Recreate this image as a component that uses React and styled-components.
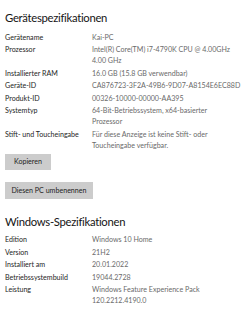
import React from 'react'
import styled, { createGlobalStyle } from 'styled-components'

const Global = createGlobalStyle`
  html, body {
    margin: 0;
    padding: 0;
    background: #ffffff;
    overflow: hidden;
  }
`

const Page = styled.div`
  width: 250px;
  height: 314px;
  overflow: hidden;
  padding: 0 0 0 5px;
  box-sizing: border-box;
  font-family: Lato, "Open Sans", sans-serif;
  color: #1a1a1a;
`

const Title = styled.h2`
  margin: ${props => props.$top}px 0 ${props => props.$bottom}px 0;
  font-size: 11.3px;
  font-weight: 400;
  letter-spacing: -0.3px;
  line-height: 16px;
  color: #151515;
`

const Specs = styled.div`
  display: grid;
  grid-template-columns: 87px 1fr;
  row-gap: 1.5px;
  font-size: 7.1px;
  line-height: 11px;
`

const Label = styled.div`
  color: #1e1e1e;
`

const Value = styled.div`
  color: #6a6a6a;
  padding-right: 4px;
`

const Button = styled.div`
  display: inline-flex;
  align-items: center;
  justify-content: center;
  height: ${props => props.$h}px;
  width: ${props => props.$w}px;
  margin-top: ${props => props.$top}px;
  background: #cccccc;
  color: #222;
  font-size: 7.1px;
  white-space: nowrap;
`

const Block = styled.div`
  display: flex;
  flex-direction: column;
  align-items: flex-start;
`

const device = [
  ['Gerätename', ['Kai-PC']],
  ['Prozessor', ['Intel(R) Core(TM) i7-4790K CPU @ 4.00GHz', '4.00 GHz']],
  ['Installierter RAM', ['16.0 GB (15.8 GB verwendbar)']],
  ['Geräte-ID', ['CA876723-3F2A-49B6-9D07-A8154E6EC88D']],
  ['Produkt-ID', ['00326-10000-00000-AA395']],
  ['Systemtyp', ['64-Bit-Betriebssystem, x64-basierter', 'Prozessor']],
  ['Stift- und Toucheingabe', ['Für diese Anzeige ist keine Stift- oder', 'Toucheingabe verfügbar.']],
]

const windows = [
  ['Edition', ['Windows 10 Home']],
  ['Version', ['21H2']],
  ['Installiert am', ['20.01.2022']],
  ['Betriebssystembuild', ['19044.2728']],
  ['Leistung', ['Windows Feature Experience Pack', '120.2212.4190.0']],
]

const SpecList = ({ rows }) => (
  <Specs>
    {rows.map(([label, lines]) => (
      <React.Fragment key={label}>
        <Label>{label}</Label>
        <Value>{lines.map(l => <div key={l}>{l}</div>)}</Value>
      </React.Fragment>
    ))}
  </Specs>
)

const App = () => (
  <Page>
    <Global />
    <Title $top={10} $bottom={5.5}>Gerätespezifikationen</Title>
    <SpecList rows={device} />
    <Block>
      <Button $top={3} $w={46} $h={16}>Kopieren</Button>
      <Button $top={12} $w={88} $h={17}>Diesen PC umbenennen</Button>
    </Block>
    <Title $top={15} $bottom={4.5}>Windows-Spezifikationen</Title>
    <SpecList rows={windows} />
    <Block>
      {/* only the top edge of this button is in view */}
      <Button $top={9} $w={46} $h={16} aria-label='Kopieren' />
    </Block>
  </Page>
)

export default App
